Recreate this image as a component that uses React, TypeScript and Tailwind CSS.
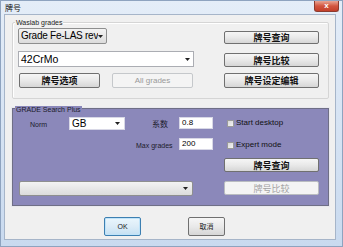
import React from "react";

const cjk = { fontFamily: '"Noto Sans CJK SC", "Liberation Sans", sans-serif' };
const sans = { fontFamily: '"Liberation Sans", "DejaVu Sans", sans-serif' };

function Btn({ children, w = "w-[95px]", h = "h-[14px]", disabled = false, cls = "" }: { children: React.ReactNode; w?: string; h?: string; disabled?: boolean; cls?: string }) {
  return (
    <div
      className={`${w} ${h} ${cls} flex items-center justify-center rounded-[2px] border text-[9px] leading-none ${
        disabled
          ? "border-[#b9bcc0] bg-[#f4f4f4] text-[#a3a3a3]"
          : "border-[#707070] bg-gradient-to-b from-[#f6f6f6] via-[#e9e9e9] to-[#d6d6d6] text-[#111] font-semibold"
      }`}
      style={cjk}
    >
      {children}
    </div>
  );
}

function Arrow() {
  return (
    <svg width="5" height="3" viewBox="0 0 5 3" className="shrink-0">
      <path d="M0 0h5L2.5 3z" fill="#222" />
    </svg>
  );
}

function Check({ label }: { label: string }) {
  return (
    <div className="flex items-center gap-[2px]">
      <div className="w-[7px] h-[7px] border border-[#9a9a9a] bg-gradient-to-br from-[#d8d8d8] to-[#f4f4f4]" />
      <span className="text-[8px] leading-none text-[#111]" style={sans}>{label}</span>
    </div>
  );
}

export default function App() {
  return (
    <div className="w-[343px] h-[247px] flex flex-col bg-gradient-to-b from-[#e4edf8] to-[#c9daef] border border-[#8ea3bf] overflow-hidden" style={sans}>
      {/* title bar */}
      <div className="h-[13px] flex items-start justify-between">
        <span className="ml-[4px] mt-[3px] text-[8px] leading-none text-[#111]" style={cjk}>牌号</span>
        <div className="mr-[3px] w-[25px] h-[11px] rounded-b-[3px] border border-t-0 border-[#8c3b2e] bg-gradient-to-b from-[#e8a493] via-[#d2553f] to-[#c33f29] flex items-center justify-center">
          <span className="text-white text-[8px] font-bold leading-none">x</span>
        </div>
      </div>
      {/* client */}
      <div className="flex-1 ml-[3px] mr-[6px] mb-[6px] bg-[#f0f0f0] border border-[#a6b5c9] flex flex-col">
        {/* group 1 */}
        <div className="relative ml-[7px] mt-[7px] w-[317px] h-[77px] border border-[#d5d5d5] rounded-[2px] shadow-[inset_1px_1px_0_#fff]">
          <span className="absolute left-[2px] top-[-4px] px-[1px] bg-[#f0f0f0] text-[7px] leading-none text-[#222]">Waslab grades</span>
          <div className="flex items-start ml-[5px] mt-[5px]">
            <div className="w-[89px] h-[16px] rounded-[2px] border border-[#8e8f8f] bg-gradient-to-b from-[#f3f3f3] to-[#dcdcdc] flex items-center pl-[2px] pr-[3px] overflow-hidden">
              <span className="flex-1 text-[10px] tracking-[-0.25px] leading-none whitespace-nowrap overflow-hidden text-[#000]">Grade Fe-LAS rev</span>
              <Arrow />
            </div>
            <Btn cls="ml-[117px] mt-[3px]" h="h-[13px]">牌号查询</Btn>
          </div>
          <div className="flex items-start ml-[5px] mt-[7px]">
            <div className="w-[176px] h-[16px] border border-[#abadb3] bg-white flex items-center pl-[2px] pr-[3px]">
              <span className="flex-1 text-[10.5px] leading-none text-[#000]">42CrMo</span>
              <Arrow />
            </div>
            <Btn cls="ml-[30px] mt-[2px]" h="h-[14px]">牌号比较</Btn>
          </div>
          <div className="flex items-start ml-[6px] mt-[6px]">
            <Btn w="w-[81px]" h="h-[15px]">牌号选项</Btn>
            <div className="ml-[12px] w-[81px] h-[15px] rounded-[2px] border border-[#c5c8cb] bg-[#f4f4f4] flex items-center justify-center text-[8px] leading-none text-[#999]" style={sans}>All grades</div>
            <Btn cls="ml-[31px]" h="h-[15px]">牌号设定编辑</Btn>
          </div>
        </div>
        {/* group 2 */}
        <div className="relative ml-[7px] mt-[9px] w-[317px] h-[98px] border border-[#6f6f86] bg-[#8b88ba] shadow-[0_0_0_1px_#e9e9ee]">
          <span className="absolute left-[2px] top-[-3px] px-[1px] bg-[#8b88ba] text-[7px] leading-none text-[#1b1b2a]">GRADE Search Plus</span>
          <div className="flex items-start mt-[8px]">
            <span className="ml-[17px] mt-[4px] w-[39px] text-[7px] leading-none text-[#1b1b2a]">Norm</span>
            <div className="w-[56px] h-[13px] bg-white border border-[#d8d8e6] flex items-center pl-[2px] pr-[4px]">
              <span className="flex-1 text-[10px] leading-none text-[#000]">GB</span>
              <Arrow />
            </div>
            <span className="ml-[27px] mt-[3px] w-[27px] text-[8px] leading-none text-[#1b1b2a]" style={cjk}>系数</span>
            <div className="w-[34px] h-[12px] bg-white border border-[#d8d8e6] flex items-center pl-[2px] text-[8px] leading-none text-[#000]">0.8</div>
            <div className="ml-[14px] mt-[2px]"><Check label="Start desktop" /></div>
          </div>
          <div className="flex items-start mt-[8px]">
            <span className="ml-[123px] mt-[4px] w-[43px] text-[7px] leading-none text-[#1b1b2a]">Max grades</span>
            <div className="w-[34px] h-[12px] bg-white border border-[#d8d8e6] flex items-center pl-[2px] text-[8px] leading-none text-[#000]">200</div>
            <div className="ml-[14px] mt-[3px]"><Check label="Expert mode" /></div>
          </div>
          <div className="flex mt-[8px]">
            <Btn cls="ml-[211px]" h="h-[14px]">牌号查询</Btn>
          </div>
          <div className="flex items-start mt-[9px]">
            <div className="ml-[6px] w-[174px] h-[15px] rounded-[2px] border border-[#8e8f8f] bg-gradient-to-b from-[#f3f3f3] to-[#dcdcdc] flex items-center justify-end pr-[4px]">
              <Arrow />
            </div>
            <Btn cls="ml-[31px]" h="h-[14px]" disabled>牌号比较</Btn>
          </div>
        </div>
        {/* footer buttons */}
        <div className="flex mt-[11px]">
          <div className="ml-[99px] w-[37px] h-[19px] rounded-[2px] border border-[#3c7fb1] bg-gradient-to-b from-[#eaf6fd] via-[#dcecf7] to-[#c4e0f3] shadow-[inset_0_0_0_1px_#bfe3f9] flex items-center justify-center text-[7px] leading-none text-[#222]">OK</div>
          <div className="ml-[47px] w-[37px] h-[19px] rounded-[2px] border border-[#707070] bg-gradient-to-b from-[#f6f6f6] via-[#e9e9e9] to-[#d6d6d6] flex items-center justify-center text-[7px] leading-none text-[#222]" style={cjk}>取消</div>
        </div>
      </div>
    </div>
  );
}
